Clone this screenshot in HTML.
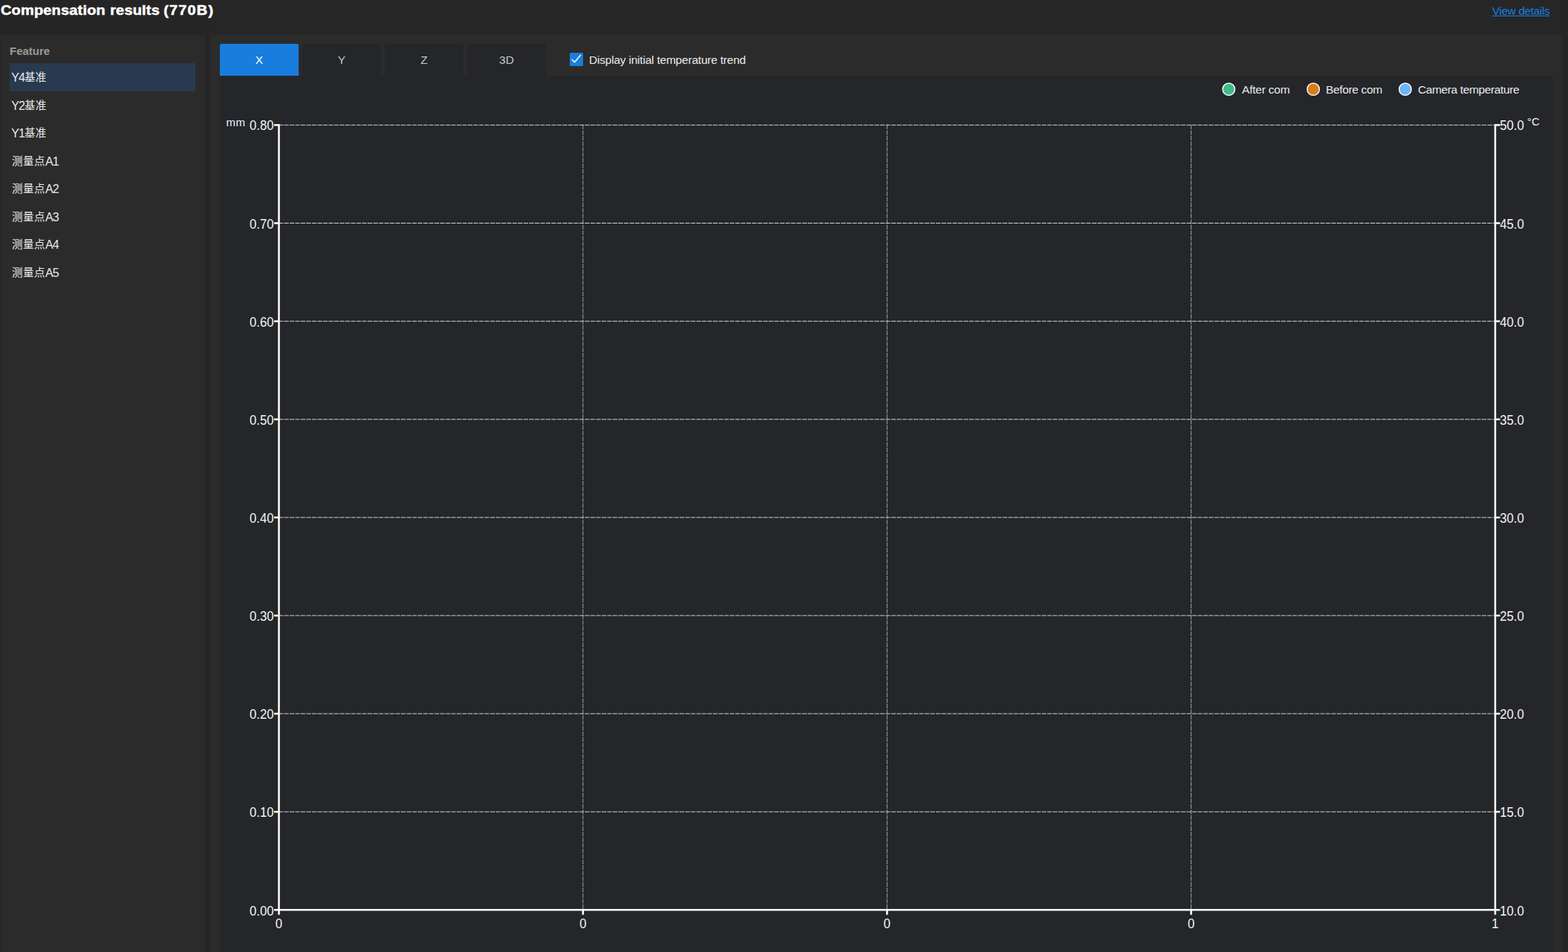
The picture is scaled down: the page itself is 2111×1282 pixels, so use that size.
<!DOCTYPE html>
<html lang="en"><head><meta charset="utf-8"><title>Compensation results</title>
<style>
html,body{margin:0;padding:0;}
body{width:2111px;height:1282px;background:#252525;position:relative;overflow:hidden;
font-family:"Liberation Sans","Noto Sans CJK SC",sans-serif;font-size:15px;color:#eaeaea;}
.abs{position:absolute;}
#hdrR{left:283px;top:0;width:1820px;height:47px;background:#262626;}
#left{left:1px;top:47px;width:275px;height:1235px;background:#2b2b2b;}
#right{left:283px;top:47px;width:1820px;height:1235px;background:#2b2b2b;}
#chart{left:296px;top:101.75px;width:1795px;height:1181px;background:#24262a;}
#title{left:0.7px;top:2px;font-size:19px;transform-origin:0 0;transform:scaleX(1.0526);font-weight:bold;color:#fff;white-space:nowrap;line-height:24px;letter-spacing:0.16px;word-spacing:0.5px;-webkit-text-stroke:0.5px #fff;}
#title span{letter-spacing:1.1px;margin-left:-1px;}
#view{left:2009px;top:5px;color:#1b7fe0;text-decoration:underline;white-space:nowrap;line-height:20px;letter-spacing:-0.2px;}
#feat{left:13px;top:59px;font-weight:bold;color:#9a9a9a;line-height:20px;}
.it{position:absolute;left:13px;width:247px;height:37.5px;line-height:39.5px;padding-left:3px;white-space:nowrap;font-size:16px;letter-spacing:-1px;overflow:hidden;}
.sel{background:#273a4f;}
.cj{font-size:14.5px;letter-spacing:0.5px;position:relative;top:-1px;}
.tab{position:absolute;top:59px;width:106px;height:42.75px;line-height:44px;font-size:15.5px;text-align:center;background:#24262a;color:#c8c8c8;border-radius:2px 2px 0 0;}
.tab.on{background:#187ddd;color:#fff;}
#cb{left:767px;top:71px;width:18px;height:18px;border-radius:1.5px;background:#187ddd;}
#cb svg{display:block;}
#cbl{left:793px;top:71px;line-height:20px;white-space:nowrap;font-size:15.5px;letter-spacing:-0.21px;}
.lg{position:absolute;top:111px;line-height:20px;white-space:nowrap;font-size:15.5px;letter-spacing:-0.21px;}
.dot{position:absolute;top:111.3px;width:15.1px;height:15.1px;border-radius:50%;border:1.25px solid #f2f2f2;}
svg text{font-family:"Liberation Sans",sans-serif;font-size:18px;fill:#f4f4f4;}
</style></head><body>
<div class="abs" id="hdrR"></div>
<div class="abs" id="left"></div>
<div class="abs" id="right"></div>
<div class="abs" id="chart"></div>
<div class="abs" id="title">Compensation results <span>(770B)</span></div>
<div class="abs" id="view">View details</div>
<div class="abs" id="feat">Feature</div>
<div class="it sel" style="top:85.0px;padding-left:2.3px;width:247.7px">Y4<span class="cj">基准</span></div>
<div class="it" style="top:122.5px;padding-left:2.3px;width:247.7px">Y2<span class="cj">基准</span></div>
<div class="it" style="top:160.0px;padding-left:2.3px;width:247.7px">Y1<span class="cj">基准</span></div>
<div class="it" style="top:197.5px"><span class="cj">测量点</span>A1</div>
<div class="it" style="top:235.0px"><span class="cj">测量点</span>A2</div>
<div class="it" style="top:272.5px"><span class="cj">测量点</span>A3</div>
<div class="it" style="top:310.0px"><span class="cj">测量点</span>A4</div>
<div class="it" style="top:347.5px"><span class="cj">测量点</span>A5</div>
<div class="tab on" style="left:296px">X</div>
<div class="tab" style="left:407px">Y</div>
<div class="tab" style="left:518px">Z</div>
<div class="tab" style="left:629px">3D</div>
<div class="abs" id="cb"><svg width="18" height="18" viewBox="0 0 18 18"><path d="M3.2 9.3 L6.6 12.8 L14.6 3.3" fill="none" stroke="#fff" stroke-width="1.5" stroke-linecap="round" stroke-linejoin="round"/></svg></div>
<div class="abs" id="cbl">Display initial temperature trend</div>
<div class="lg" style="left:1672px">After com</div>
<div class="lg" style="left:1785px;letter-spacing:-0.35px">Before com</div>
<div class="lg" style="left:1909px;letter-spacing:-0.38px">Camera temperature</div>
<svg class="abs" style="left:0;top:0" width="2111" height="1282" viewBox="0 0 2111 1282">
<g stroke="#d2d2d2" stroke-width="1" stroke-dasharray="6.25 1.25" fill="none">
<line stroke="#a4a4a4" x1="784.88" y1="167.775" x2="784.88" y2="1225.30"/>
<line stroke="#a4a4a4" x1="1194.25" y1="167.775" x2="1194.25" y2="1225.30"/>
<line stroke="#a4a4a4" x1="1603.62" y1="167.775" x2="1603.62" y2="1225.30"/>
<line x1="374.875" y1="168.40" x2="2013.00" y2="168.40"/>
<line x1="374.875" y1="300.51" x2="2013.00" y2="300.51"/>
<line x1="374.875" y1="432.62" x2="2013.00" y2="432.62"/>
<line x1="374.875" y1="564.74" x2="2013.00" y2="564.74"/>
<line x1="374.875" y1="696.85" x2="2013.00" y2="696.85"/>
<line x1="374.875" y1="828.96" x2="2013.00" y2="828.96"/>
<line x1="374.875" y1="961.07" x2="2013.00" y2="961.07"/>
<line x1="374.875" y1="1093.19" x2="2013.00" y2="1093.19"/>
</g>
<g stroke="#fff" stroke-width="2.5" fill="none">
<path d="M375.50 167.15 V1225.30 H2013.00 V167.15" stroke-linejoin="miter"/>
<line x1="369.00" y1="168.40" x2="375.50" y2="168.40"/>
<line x1="2013.00" y1="168.40" x2="2019.50" y2="168.40"/>
<line x1="369.00" y1="300.51" x2="375.50" y2="300.51"/>
<line x1="2013.00" y1="300.51" x2="2019.50" y2="300.51"/>
<line x1="369.00" y1="432.62" x2="375.50" y2="432.62"/>
<line x1="2013.00" y1="432.62" x2="2019.50" y2="432.62"/>
<line x1="369.00" y1="564.74" x2="375.50" y2="564.74"/>
<line x1="2013.00" y1="564.74" x2="2019.50" y2="564.74"/>
<line x1="369.00" y1="696.85" x2="375.50" y2="696.85"/>
<line x1="2013.00" y1="696.85" x2="2019.50" y2="696.85"/>
<line x1="369.00" y1="828.96" x2="375.50" y2="828.96"/>
<line x1="2013.00" y1="828.96" x2="2019.50" y2="828.96"/>
<line x1="369.00" y1="961.07" x2="375.50" y2="961.07"/>
<line x1="2013.00" y1="961.07" x2="2019.50" y2="961.07"/>
<line x1="369.00" y1="1093.19" x2="375.50" y2="1093.19"/>
<line x1="2013.00" y1="1093.19" x2="2019.50" y2="1093.19"/>
<line x1="369.00" y1="1225.30" x2="375.50" y2="1225.30"/>
<line x1="2013.00" y1="1225.30" x2="2019.50" y2="1225.30"/>
<line x1="375.50" y1="1225.30" x2="375.50" y2="1231.80"/>
<line x1="784.88" y1="1225.30" x2="784.88" y2="1231.80"/>
<line x1="1194.25" y1="1225.30" x2="1194.25" y2="1231.80"/>
<line x1="1603.62" y1="1225.30" x2="1603.62" y2="1231.80"/>
<line x1="2013.00" y1="1225.30" x2="2013.00" y2="1231.80"/>
</g>
<text transform="translate(368.60,175) scale(0.93,1)" text-anchor="end">0.80</text>
<text transform="translate(2019.20,175) scale(0.93,1)">50.0</text>
<text transform="translate(368.60,308) scale(0.93,1)" text-anchor="end">0.70</text>
<text transform="translate(2019.20,308) scale(0.93,1)">45.0</text>
<text transform="translate(368.60,440) scale(0.93,1)" text-anchor="end">0.60</text>
<text transform="translate(2019.20,440) scale(0.93,1)">40.0</text>
<text transform="translate(368.60,572) scale(0.93,1)" text-anchor="end">0.50</text>
<text transform="translate(2019.20,572) scale(0.93,1)">35.0</text>
<text transform="translate(368.60,704) scale(0.93,1)" text-anchor="end">0.40</text>
<text transform="translate(2019.20,704) scale(0.93,1)">30.0</text>
<text transform="translate(368.60,836) scale(0.93,1)" text-anchor="end">0.30</text>
<text transform="translate(2019.20,836) scale(0.93,1)">25.0</text>
<text transform="translate(368.60,968) scale(0.93,1)" text-anchor="end">0.20</text>
<text transform="translate(2019.20,968) scale(0.93,1)">20.0</text>
<text transform="translate(368.60,1100) scale(0.93,1)" text-anchor="end">0.10</text>
<text transform="translate(2019.20,1100) scale(0.93,1)">15.0</text>
<text transform="translate(368.60,1233) scale(0.93,1)" text-anchor="end">0.00</text>
<text transform="translate(2019.20,1233) scale(0.93,1)">10.0</text>
<text transform="translate(375.50,1250) scale(0.93,1)" text-anchor="middle">0</text>
<text transform="translate(784.88,1250) scale(0.93,1)" text-anchor="middle">0</text>
<text transform="translate(1194.25,1250) scale(0.93,1)" text-anchor="middle">0</text>
<text transform="translate(1603.62,1250) scale(0.93,1)" text-anchor="middle">0</text>
<text transform="translate(2013.00,1250) scale(0.93,1)" text-anchor="middle">1</text>
<g stroke="#f6f6f6" stroke-width="1.5">
<circle cx="1654.3" cy="120.15" r="8.2" fill="#40bb88"/>
<circle cx="1768.1" cy="120.15" r="8.2" fill="#d97c16"/>
<circle cx="1891.85" cy="120.15" r="8.2" fill="#6cb5ff"/>
</g>
<text x="304.5" y="170" style="font-size:15px;letter-spacing:0.6px">mm</text>
<text x="2056" y="169" style="font-size:15px">°C</text>
</svg>
</body></html>
